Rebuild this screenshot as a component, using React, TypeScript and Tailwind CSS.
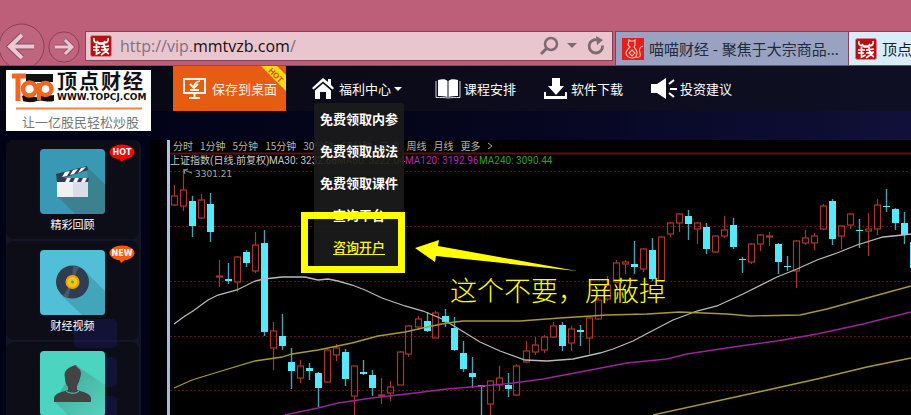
import React from "react";

type Candle = [number, number, number, number, number, "r" | "c"];

// x centre, high, low, body top, body bottom, direction
const candles: Candle[] = [
  [174, 185, 206, 196, 205, "r"], [183, 169, 211, 190, 206, "r"], [192, 196, 237, 201, 226, "c"],
  [201, 194, 219, 200, 218, "r"], [210, 193, 242, 204, 232, "c"], [219, 260, 287, 276, 277, "r"],
  [228, 263, 284, 279, 281, "c"], [237, 256, 292, 257, 282, "r"], [246, 250, 267, 252, 263, "c"],
  [255, 232, 273, 245, 271, "r"], [264, 230, 336, 243, 332, "c"], [273, 322, 370, 331, 348, "r"],
  [282, 314, 350, 336, 346, "c"], [291, 348, 389, 362, 371, "c"], [300, 360, 383, 366, 378, "r"],
  [309, 363, 380, 368, 371, "c"], [318, 372, 407, 373, 388, "c"], [327, 349, 383, 350, 382, "r"],
  [336, 344, 361, 348, 355, "r"], [345, 349, 386, 352, 379, "c"], [354, 366, 415, 366, 396, "r"],
  [363, 360, 375, 372, 374, "c"], [372, 370, 396, 375, 388, "c"], [381, 378, 404, 395, 396, "r"],
  [390, 381, 401, 387, 393, "r"], [400, 351, 385, 352, 385, "r"], [408, 325, 357, 326, 354, "r"],
  [418, 316, 330, 319, 327, "r"], [427, 312, 332, 321, 331, "c"], [435, 311, 338, 313, 338, "r"],
  [445, 309, 327, 316, 322, "c"], [454, 317, 351, 328, 350, "c"], [463, 341, 372, 353, 369, "c"],
  [472, 357, 388, 373, 377, "c"], [481, 385, 415, 385, 387, "c"], [490, 380, 415, 381, 404, "r"],
  [499, 366, 391, 378, 385, "r"], [508, 373, 397, 385, 389, "c"], [516, 364, 396, 366, 395, "r"],
  [526, 341, 363, 351, 362, "r"], [535, 337, 355, 345, 352, "r"], [544, 335, 353, 337, 350, "r"],
  [553, 322, 338, 326, 337, "r"], [562, 322, 351, 325, 346, "c"], [571, 326, 351, 329, 343, "r"],
  [580, 325, 346, 330, 332, "c"], [589, 317, 354, 318, 338, "r"], [598, 298, 320, 300, 319, "r"],
  [607, 276, 301, 285, 299, "r"], [616, 260, 283, 263, 282, "r"], [625, 260, 274, 262, 264, "r"],
  [634, 241, 274, 264, 267, "c"], [643, 248, 272, 249, 269, "r"], [652, 238, 281, 250, 279, "c"],
  [661, 236, 282, 237, 281, "r"], [670, 222, 237, 223, 234, "r"], [679, 213, 232, 214, 223, "r"],
  [688, 210, 240, 216, 224, "c"], [697, 222, 244, 223, 229, "r"], [706, 223, 254, 227, 249, "c"],
  [715, 235, 253, 236, 252, "r"], [724, 216, 238, 230, 236, "r"], [733, 218, 249, 225, 247, "c"],
  [742, 257, 273, 259, 260, "c"], [751, 243, 264, 244, 262, "r"], [760, 234, 251, 235, 244, "r"],
  [769, 232, 246, 236, 237, "r"], [778, 243, 274, 244, 262, "c"], [787, 256, 271, 266, 267, "c"],
  [796, 240, 288, 241, 271, "r"], [805, 230, 245, 238, 243, "r"], [814, 233, 250, 236, 243, "r"],
  [823, 204, 230, 206, 229, "r"], [832, 199, 245, 201, 239, "c"], [841, 225, 249, 226, 236, "r"],
  [850, 213, 229, 214, 225, "r"], [859, 219, 248, 230, 231, "c"], [868, 213, 256, 229, 231, "r"],
  [877, 199, 235, 205, 229, "r"], [886, 189, 212, 206, 207, "c"], [895, 208, 230, 209, 223, "c"],
  [904, 212, 244, 223, 235, "c"], [913, 238, 275, 242, 268, "c"],
];

const averages = [
  { color: "#b9b9b9", points: "174,324 185,316 193,311 208,300 218,295 237,290 255,281 264,279 282,277 305,277 318,280 328,279 338,281 352,285 365,290 382,298 405,306 423,311 440,318 454,326 480,342 500,351 525,360 547,361 573,359 600,353 613,349 633,341 650,332 673,320 697,311 717,306 743,294 777,277 797,269 817,260 837,253 857,245 883,237 903,235 911,234" },
  { color: "#a79a35", points: "174,388 192,380 218,372 255,361 282,357 292,354 318,350 352,343 378,336 405,332 427,327 447,323 463,321 520,321 560,318 607,315 647,314 680,312 727,314 750,316 800,315 827,309 867,298 911,286" },
  { color: "#9c249c", points: "285,415 318,408 338,403 372,398 415,393 447,389 483,386 513,383 543,379 580,372 627,363 667,359 687,354 740,346 777,341 817,334 863,324 911,312" },
  { color: "#a79a35", points: "653,415 717,401 763,391 817,379 867,367 911,358" },
];

function CandleChart() {
  return (
    <svg viewBox="170 140 741 275" width="741" height="275" className="block shrink-0" role="img" aria-label="上证指数 K线图">
      <path d="M170 153.5H911" stroke="#5c120c" strokeWidth="2" />
      {[171, 226, 281, 336, 390].map((y) => (
        <path key={y} d={`M170 ${y}.5H911`} stroke="#5e1712" strokeDasharray="2 2" />
      ))}
      {candles.map(([x, high, low, top, bottom, kind]) =>
        kind === "c" ? (
          <g key={x}>
            <path d={`M${x + 0.5} ${high}V${low}`} stroke="#4aa3af" strokeWidth="1.4" />
            <rect x={x - 3} y={top} width="7" height={Math.max(bottom - top, 1)} fill="#55e9fb" />
          </g>
        ) : (
          <g key={x} stroke="#a8382b" fill="none" strokeWidth="1.2">
            <path d={`M${x + 0.5} ${high}V${top}M${x + 0.5} ${bottom}V${low}`} />
            <rect x={x - 2.5} y={top} width="6" height={bottom - top} />
          </g>
        ),
      )}
      {averages.map((line) => (
        <polyline key={line.points} points={line.points} fill="none" stroke={line.color} strokeWidth="1.3" />
      ))}
      <path d="M192 173L184 170M184 170l1 4M184 170l4-1" stroke="#999" fill="none" />
      <text x="195" y="177" fontSize="9" fill="#a5a5a5" fontFamily="DejaVu Sans, sans-serif">3301.21</text>
    </svg>
  );
}

function BullBadge() {
  return (
    <svg viewBox="0 0 22 22" className="size-[22px] shrink-0" aria-hidden="true">
      <rect x=".5" y=".5" width="21" height="21" rx="2" fill="#b90f10" stroke="#d98287" />
      <g fill="none" stroke="#fff" strokeWidth="1.7">
        <path d="M4 3c-1 3 1 5 4 5h6c3 0 5-2 4-5M7 6l2 3h4l2-3" />
        <path d="M3 12h7M6.500 9v10l4-2M3 15h6M11 12l8-1M11 15l8-1M14 9c0 5 2 8 5 10M18 15l-7 5" />
      </g>
    </svg>
  );
}

function CatBadge() {
  return (
    <svg viewBox="0 0 22 22" className="size-[22px] shrink-0" aria-hidden="true">
      <rect width="22" height="22" fill="#e51d1b" />
      <g fill="none" stroke="#ffc4bc" strokeWidth="1.1">
        <path d="M7 2l1 1h4l1-1v5l-1 2c2 2 3 4 3 6 0 3-2 5-5 5s-6-2-6-5c0-2 2-4 4-6L6 7zM14 19c4 1 5-1 4-4s-1-6 3-7" />
        <path d="M10 12l3 3-3 3-3-3z" />
      </g>
    </svg>
  );
}

function BrowserBar() {
  return (
    <header className="flex h-[66px] items-start overflow-hidden border-b border-[#8f4560] bg-[#be5f79] pt-[31px]">
      <button aria-label="后退" className="-mt-2 ml-[-2px] size-[47px] shrink-0">
        <svg viewBox="0 0 47 47" className="size-full">
          <circle cx="23.500" cy="23.500" r="22.500" fill="#c0657f" stroke="#8a4059" />
          <path d="M12 23.500h24M24 12L12 23.500 24 35" fill="none" stroke="#8f4a63" strokeWidth="6" />
          <path d="M12 23.500h24M24 12L12 23.500 24 35" fill="none" stroke="#e9c8d3" strokeWidth="4" />
        </svg>
      </button>
      <button aria-label="前进" className="ml-[3px] size-8 shrink-0">
        <svg viewBox="0 0 32 32" className="size-full">
          <circle cx="16" cy="16" r="15.200" fill="#c0657f" stroke="#8a4059" />
          <path d="M7 16h16M17 9l7 7-7 7" fill="none" stroke="#8f4a63" strokeWidth="4.500" />
          <path d="M7 16h16M17 9l7 7-7 7" fill="none" stroke="#e9c8d3" strokeWidth="3" />
        </svg>
      </button>
      <div className="ml-[5px] flex h-[30px] w-[528px] shrink-0 items-center border border-[#8a4059] bg-[#e8c5cf] pl-1">
        <BullBadge />
        <div className="ml-2 flex-1 font-['Open_Sans'] text-[16px] leading-6 text-[#857079]">
          http://vip.<span className="text-[#141013]">mmtvzb.com</span>/
        </div>
        <button aria-label="搜索">
          <svg viewBox="0 0 20 20" className="size-5" fill="none" stroke="#806a72">
            <circle cx="12" cy="8" r="6" strokeWidth="2.500" />
            <path d="M8 12l-6 6" strokeWidth="3" />
          </svg>
        </button>
        <button aria-label="历史记录" className="ml-2">
          <svg viewBox="0 0 10 6" className="h-[6px] w-[10px]" fill="#806a72"><path d="M0 0h10L5 5z" /></svg>
        </button>
        <button aria-label="刷新" className="ml-[9px] mr-[6px]">
          <svg viewBox="0 0 20 20" className="size-5" fill="none" stroke="#806a72">
            <path d="M16.500 9.500a6.700 6.700 0 1 1-5-5.700" strokeWidth="2.800" />
            <path d="M10 0l7 4-6 5z" fill="#806a72" stroke="none" />
          </svg>
        </button>
      </div>
      <div role="tablist" className="ml-[2px] flex h-[34px] flex-1 font-['Noto_Sans','Noto_Sans_CJK_SC',sans-serif] text-[15px] leading-6">
        <button role="tab" className="flex w-[234px] shrink-0 items-center gap-[5px] border border-b-0 border-[#8a4059] bg-[#99a3c1] pl-[6px] text-[#222a3d]">
          <CatBadge />
          <span className="whitespace-nowrap">喵喵财经 - 聚焦于大宗商品...</span>
        </button>
        <button role="tab" aria-selected="true" className="flex min-w-0 flex-1 items-center gap-[5px] overflow-hidden border-t border-[#8a4059] bg-[#d8ecfa] pl-[6px] text-[#1c1c20]">
          <BullBadge />
          <span className="whitespace-nowrap">顶点</span>
        </button>
      </div>
    </header>
  );
}

function Logo() {
  return (
    <a href="#home" className="mt-1 ml-[6px] block h-[61px] w-[145px] shrink-0 bg-white">
      <svg viewBox="0 0 145 61" width="145" height="61" role="img" aria-label="顶点财经">
        <path d="M20 4h27v8H20zM16 26c8-4 12 4 18 0 4-2 9 0 14-1v6c-9 2-12-2-17 0-6 2-11 1-14 0z" fill="#111" />
        <g fill="none" stroke="#f26522">
          <path d="M6 6h14M12 6v25" strokeWidth="5" />
          <circle cx="23.500" cy="19" r="6.500" strokeWidth="4.500" fill="#fff" />
          <circle cx="39.500" cy="19" r="6" strokeWidth="4.500" fill="#fff" />
          <path d="M33 13v17" strokeWidth="4" />
        </g>
        <text y="19" fontSize="20" fontWeight="700" fill="#111" fontFamily="Noto Sans CJK SC, sans-serif">
          <tspan x="51">顶</tspan><tspan x="73">点</tspan><tspan x="95">财</tspan><tspan x="117">经</tspan>
        </text>
        <text x="51" y="30" fontSize="9" fontWeight="700" fill="#111" fontFamily="DejaVu Sans, sans-serif">WWW.TOPCJ.COM</text>
        <path d="M10 38.500h126" stroke="#f58345" strokeWidth="2" />
        <text x="16" y="57" fontSize="13" fill="#777" fontFamily="Noto Sans CJK SC, sans-serif">让一亿股民轻松炒股</text>
      </svg>
    </a>
  );
}

const menuItems = ["免费领取内参", "免费领取战法", "免费领取课件", "查询平台"];

function SiteNav() {
  return (
    <nav className="relative z-20 flex h-[45px] items-start bg-linear-to-r from-[#080812] to-[#0f0f24] text-[13px] leading-[45px] whitespace-nowrap text-white">
      <Logo />
      <a href="#save" className="relative ml-[22px] flex h-[45px] w-[113px] shrink-0 items-center overflow-hidden bg-[#e65c12] pl-[9px] text-[#fff1e4]">
        <svg viewBox="0 0 25 23" className="h-[23px] w-[25px] shrink-0" fill="none" stroke="#fff4e8" strokeWidth="2">
          <path d="M2 2h21v14H2zM12.500 16v4M7 21h11" />
          <path d="M18 4c-4 1-6 3-6 6M8 7l4 4 4-4M8 13h9" strokeWidth="1.800" />
        </svg>
        <span className="ml-[5px]">保存到桌面</span>
        <svg viewBox="0 0 25 25" className="absolute top-0 right-0 size-[25px]">
          <path d="M0 0h16l9 9v16z" fill="#ffd817" />
          <text x="15" y="12" textAnchor="middle" fontSize="8" fontWeight="700" fill="#d9480a" fontFamily="Liberation Sans, sans-serif" transform="rotate(45 15 9)">HOT</text>
        </svg>
      </a>
      <div className="relative ml-[26px] w-[90px] shrink-0">
        <button className="flex h-[45px] items-center" aria-haspopup="true" aria-expanded="true">
          <svg viewBox="0 0 22 21" className="h-[21px] w-[22px]" fill="#fff">
            <path d="M11 0l5 4V1h3v6l3 3-1.500 1.500L11 3.500 1.500 11.500 0 10z" />
            <path d="M11 5.500l8 7V21h-5v-7H8v7H3v-8.500z" />
          </svg>
          <span className="ml-[5px]">福利中心</span>
          <svg viewBox="0 0 8 4" className="ml-[3px] h-1 w-2" fill="#fff"><path d="M0 0h8L4 4z" /></svg>
        </button>
        <ul className="absolute top-[37px] left-[2px] h-[166px] w-[90px] rounded-t-[3px] bg-[#1c1c1c]/90 text-center text-[13px] leading-8 font-bold">
          {menuItems.map((item) => (
            <li key={item}><a href="#menu" className="block">{item}</a></li>
          ))}
          <li><a href="#account" className="block font-medium text-[#ffff00] underline underline-offset-2">咨询开户</a></li>
        </ul>
        <div className="pointer-events-none absolute top-[146px] left-[-11px] h-[61px] w-[104px] border-[7px] border-[#ffff00]" />
      </div>
      <a href="#course" className="ml-[33px] flex h-[45px] shrink-0 items-center gap-[3px]">
        <svg viewBox="0 0 26 20" className="h-5 w-[26px]" fill="#fff">
          <path d="M3 1c4-1 8-1 9.500 1v16C10 17 6 17 3 17zM23 1c-4-1-8-1-9.500 1v16c2.500-1 6.500-1 9.500-1z" />
          <path d="M1 2v16.500c5 0 9 0 12 .5 3-.5 7-.5 12-.5V2" fill="none" stroke="#ddd" />
        </svg>
        <span>课程安排</span>
      </a>
      <a href="#download" className="ml-[28px] flex h-[45px] shrink-0 items-center gap-[4px]">
        <svg viewBox="0 0 23 21" className="h-[21px] w-[23px]" fill="#fff">
          <path d="M8 0h8v8h4l-8 9-8-9h4z" />
          <path d="M0 14h2v4h19v-4h2v7H0z" />
        </svg>
        <span>软件下载</span>
      </a>
      <a href="#advice" className="ml-[28px] flex h-[45px] shrink-0 items-center gap-[3px]">
        <svg viewBox="0 0 26 21" className="h-[21px] w-[26px]" fill="#fff">
          <path d="M0 6h6l9-6v21l-9-6H0z" />
          <path d="M18 6l5-4M19 11h7M18 15l5 4" stroke="#fff" strokeWidth="2.200" />
        </svg>
        <span>投资建议</span>
      </a>
    </nav>
  );
}

function FilmTile() {
  return (
    <svg viewBox="0 0 65 65" className="size-[65px] rounded-[4px] bg-[#3799b3]" aria-hidden="true">
      <path d="M47 18l18 17v30H35L17 47l31-14z" fill="#3a8290" />
      <path d="M17 33h31v15H17z" fill="#eff0f2" />
      <path d="M33 33h15v15H33z" fill="#d9dde5" />
      <path d="M16 25l31-8 1 4-25 8h26l-1 4H17z" fill="#2e3e50" />
      <path d="M25 23l5-1-3 5-5 1zM33 21l5-1-4 5-4 1zM41 19l5-1-4 4-4 2zM27 29h4l-2 4h-4zM35 29h4l-2 4h-4zM43 29h4l-2 4h-4z" fill="#f5f5f5" />
    </svg>
  );
}

function DiscTile() {
  return (
    <svg viewBox="0 0 65 65" className="size-[65px] rounded-[4px] bg-[#52bfd9]" aria-hidden="true">
      <path d="M44 20l21 21v24H42L20 44z" fill="#42a5b9" />
      <circle cx="32.500" cy="32" r="16.500" fill="#2e3e50" />
      <path d="M32 32l1-16 6 1zM32 32l-4 16-5-2z" fill="#49596b" />
      <circle cx="32.500" cy="32" r="7" fill="#ee9f12" />
      <circle cx="32.500" cy="32" r="5" fill="#f4c60c" />
      <circle cx="32.500" cy="32" r="1.500" fill="#3f9cad" />
    </svg>
  );
}

function PersonTile() {
  return (
    <svg viewBox="0 0 65 65" className="size-[65px] rounded-[4px] bg-[#4bd5c0]" aria-hidden="true">
      <defs>
        <linearGradient id="shade" x1="0" y1="0" x2="1" y2="1">
          <stop offset="0" stopColor="#3fa397" />
          <stop offset="1" stopColor="#56d3c0" />
        </linearGradient>
      </defs>
      <path d="M37 15l28 19v31H29L14 50z" fill="url(#shade)" />
      <path d="M36 14l1 2c4 3 5 6 3 11-1 5-3 7-3 9v3c6 2 13 3 14 8v4H14v-4c1-5 8-6 14-8v-3c-2-2-3-5-3-9-2-7 3-11 11-13z" fill="#434343" />
      <path d="M26 40c4 3 10 3 13 0" fill="none" stroke="#4bd5c0" />
    </svg>
  );
}

function Bubble({ label, className }: { label: string; className: string }) {
  return (
    <span className={`absolute top-1 left-[103px] ${className}`}>
      <svg viewBox="0 0 26 18" className="h-[18px] w-[26px]">
        <ellipse cx="13" cy="8" rx="12.500" ry="7.500" fill="currentColor" />
        <path d="M10 14h7l-5 4z" fill="currentColor" />
        <text x="13" y="11" textAnchor="middle" fontSize="8" fontWeight="700" fill="#fff" fontFamily="DejaVu Sans, sans-serif">{label}</text>
      </svg>
    </span>
  );
}

const cards = [
  { id: "review", label: "精彩回顾", tile: <FilmTile />, badge: <Bubble label="HOT" className="text-[#fb0303]" /> },
  { id: "video", label: "财经视频", tile: <DiscTile />, badge: <Bubble label="NEW" className="text-[#fd5a05]" /> },
  { id: "person", label: "", tile: <PersonTile />, badge: null },
];

function Sidebar() {
  return (
    <aside className="relative ml-[6px] flex w-[135px] shrink-0 flex-col gap-[2px] self-start rounded-[8px] bg-[#141427] pr-[2px]">
      {cards.map((card) => (
        <a key={card.id} href="#channel" className="relative flex h-[99px] flex-col items-center rounded-[8px] bg-[#0d0d18] pt-[9px]">
          <span className="relative z-10">{card.tile}</span>
          {card.badge}
          <span className="relative z-10 text-[11px] leading-[21px] text-white">{card.label}</span>
        </a>
      ))}
      <div className="absolute top-[179px] left-[68px] h-[29px] w-[43px] rounded-[5px] bg-[#1c1c66]/40" />
      <div className="absolute top-[217px] left-[68px] h-[30px] w-[43px] rounded-[5px] bg-[#1c1c66]/40" />
      <div className="absolute top-[256px] left-[68px] h-[30px] w-[43px] rounded-[5px] bg-[#1c1c66]/40" />
    </aside>
  );
}

const periods = ["分时", "1分钟", "5分钟", "15分钟", "30分钟", "60分钟", "日线", "周线", "月线", "更多"];

function MarketPanel() {
  return (
    <main className="ml-[9px] flex min-w-0 flex-1 overflow-hidden bg-black pl-[17px]">
      <div className="w-[3px] shrink-0 bg-linear-to-b from-[#a9c4e8] to-[#aab6dc]" />
      <div className="relative min-w-0 flex-1 overflow-hidden">
        <CandleChart />
        <div className="absolute top-0 left-[3px] flex gap-[7px] text-[10px] leading-[11px] whitespace-nowrap text-[#b4b4b4]">
          {periods.map((p) => (
            <button key={p} className={p === "日线" ? "text-[#26b5c5]" : ""}>{p}</button>
          ))}
          <button aria-label="展开">
            <svg viewBox="0 0 6 8" className="h-2 w-[6px]" fill="none" stroke="#aaa"><path d="M1 1l4 3-4 3" /></svg>
          </button>
        </div>
        <div className="absolute top-[15px] left-0 flex font-['Roboto','Noto_Sans_CJK_SC',sans-serif] text-[10px] leading-3 whitespace-nowrap text-[#c9c9c9]">
          <span className="w-[99px]">上证指数(日线.前复权)</span>
          <span className="w-[68px]">MA30: 3232.66</span>
          <span className="w-[68px] text-[#b5a520]">MA60: 3222.04</span>
          <span className="w-[74px] text-[#b62ab6]">MA120: 3192.96</span>
          <span className="text-[#2aa32a]">MA240: 3090.44</span>
        </div>
        <svg viewBox="0 0 164 34" className="absolute top-[99px] left-[245px] h-[34px] w-[164px]" fill="#ffff00" aria-hidden="true">
          <path d="M0 9L24 1l-1 6 139 25L21 17l-1 6z" />
        </svg>
        <p className="absolute top-[132px] left-[280px] font-['Noto_Sans_CJK_SC',sans-serif] text-[27px] leading-9 font-light whitespace-nowrap text-[#ffff00]">
          这个不要，屏蔽掉
        </p>
      </div>
    </main>
  );
}

export default function App() {
  return (
    <div lang="zh-CN" className="flex h-screen flex-col overflow-hidden bg-[#020214] font-['Noto_Sans_CJK_SC',sans-serif]">
      <BrowserBar />
      <SiteNav />
      <div className="flex min-h-0 flex-1 bg-linear-to-r from-[#020216] via-[#05051c] to-[#10103a] pt-[29px]">
        <Sidebar />
        <MarketPanel />
      </div>
    </div>
  );
}
